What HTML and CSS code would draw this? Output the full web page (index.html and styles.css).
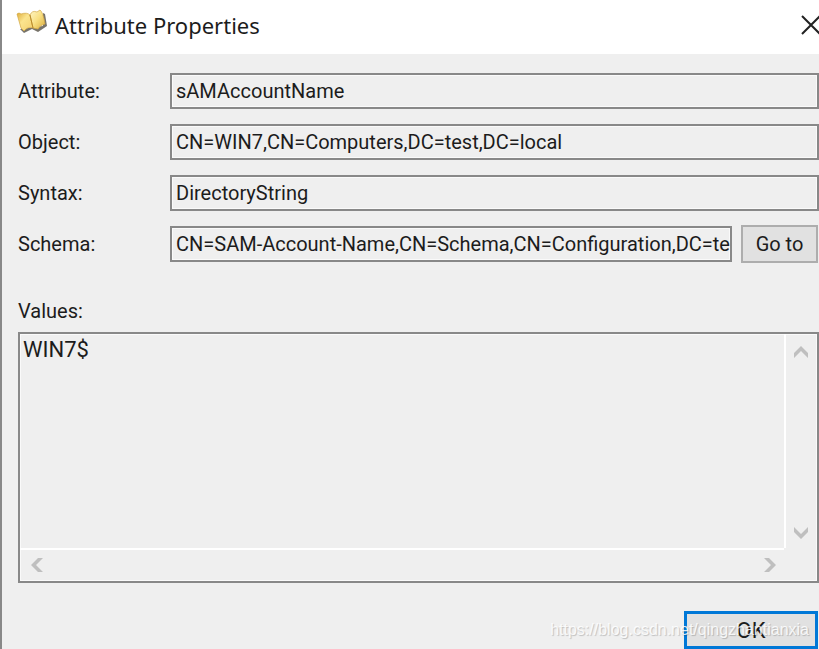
FILE: index.html
```
<!DOCTYPE html>
<html lang="en">
<head>
  <meta charset="UTF-8" />
  <meta name="viewport" content="width=device-width, initial-scale=1.0"/>
  <title>Attribute Properties</title>
  <link rel="stylesheet" href="styles.css">
</head>
<body>
  <div id="dialog">
    <header id="title-bar">
      <svg class="book" width="32" height="26" viewBox="0 0 32 26">
        <defs>
          <linearGradient id="page-left" x1="0" y1="0" x2="1" y2="1">
            <stop offset="0" stop-color="#dfae3c"/>
            <stop offset="0.4" stop-color="#fbe48e"/>
            <stop offset="1" stop-color="#f3d070"/>
          </linearGradient>
          <linearGradient id="page-right" x1="0" y1="0" x2="1" y2="1">
            <stop offset="0" stop-color="#fff6c8"/>
            <stop offset="0.5" stop-color="#f8df82"/>
            <stop offset="1" stop-color="#dcae3c"/>
          </linearGradient>
        </defs>
        <path d="M4 20 L8 24 L16 20 L22 23 L31 17 L29 5 L27 4 L27 17 Z" fill="#77736a"/>
        <path d="M1 5 Q3 3 5 5 Q11 3 14 6 L17 19 Q12 17 8 22 L5 19 Z" fill="url(#page-left)" stroke="#d3a844" stroke-width="0.7"/>
        <path d="M14 6 Q16 1 21 3 L24 1 Q27 3 29 15 Q24 16 22 20 L17 19 Z" fill="url(#page-right)" stroke="#d3a844" stroke-width="0.7"/>
        <path d="M14 6 L17 19" stroke="#b98b2c"/>
      </svg>
      <h1>Attribute Properties</h1>
      <button class="close" aria-label="Close">
        <svg width="18" height="20" viewBox="0 0 18 20">
          <path d="M1 1 L19 19 M19 1 L1 19" stroke="#222" stroke-width="2" fill="none"/>
        </svg>
      </button>
    </header>

    <main>
      <div class="row">
        <label for="attribute">Attribute:</label>
        <input id="attribute" type="text" value="sAMAccountName" readonly>
      </div>
      <div class="row">
        <label for="object">Object:</label>
        <input id="object" type="text" value="CN=WIN7,CN=Computers,DC=test,DC=local" readonly>
      </div>
      <div class="row">
        <label for="syntax">Syntax:</label>
        <input id="syntax" type="text" value="DirectoryString" readonly>
      </div>
      <div class="row">
        <label for="schema">Schema:</label>
        <input id="schema" type="text" value="CN=SAM-Account-Name,CN=Schema,CN=Configuration,DC=te" readonly>
        <button class="goto">Go to</button>
      </div>

      <label class="values-label" for="values">Values:</label>
      <div class="list">
        <textarea id="values" readonly>WIN7$</textarea>
        <div class="scroll vertical">
          <button aria-label="Scroll up">
            <svg width="14" height="12" viewBox="0 0 14 12"><path d="M0 7 L7 0 L14 7 V12 L7 5 L0 12 Z"/></svg>
          </button>
          <button aria-label="Scroll down">
            <svg width="14" height="12" viewBox="0 0 14 12"><path d="M0 5 L7 12 L14 5 V0 L7 7 L0 0 Z"/></svg>
          </button>
        </div>
        <div class="scroll horizontal">
          <button aria-label="Scroll left">
            <svg width="12" height="14" viewBox="0 0 12 14"><path d="M7 0 L0 7 L7 14 H12 L5 7 L12 0 Z"/></svg>
          </button>
          <button aria-label="Scroll right">
            <svg width="12" height="14" viewBox="0 0 12 14"><path d="M5 0 L12 7 L5 14 H0 L7 7 L0 0 Z"/></svg>
          </button>
        </div>
      </div>
    </main>

    <footer>
      <button class="ok">OK</button>
      <span class="watermark">https://blog.csdn.net/qingzhantianxia</span>
    </footer>
  </div>
</body>
</html>
```
FILE: styles.css
```
* {
  box-sizing: border-box;
}
body {
  margin: 0;
  font-family: Roboto, "Liberation Sans", sans-serif;
  font-size: 20px;
  color: #1c1c1c;
  background: #efefef;
}
button, input, textarea {
  font: inherit;
  color: inherit;
}
#dialog {
  min-height: 100vh;
  border-left: 2px solid #888;
}
#title-bar {
  display: flex;
  align-items: center;
  height: 54px;
  padding: 0 0 4px 14px;
  background: #fff;
}
#title-bar .book {
  margin-bottom: 6px;
}
#title-bar h1 {
  flex: 1;
  margin: 0 0 0 7px;
  font-family: "Noto Sans", sans-serif;
  font-size: 22px;
  font-weight: 400;
}
.close {
  padding: 0;
  border: none;
  background: none;
}
.close svg {
  display: block;
}
main {
  padding: 19px 0 0 16px;
}
.row {
  display: flex;
  align-items: center;
  margin-bottom: 15px;
}
.row label {
  width: 152px;
}
.row input {
  flex: 1;
  min-width: 0;
  height: 36px;
  padding: 0 0 0 4px;
  border: 2px solid #888;
  outline: none;
  background: #efefef;
  box-shadow: inset 0 0 0 1px #fafafa;
}
.row .goto {
  width: 77px;
  height: 38px;
  margin: -1px 1px -1px 9px;
  padding: 0;
  border: 2px solid #adadad;
  background: #e1e1e1;
}
.values-label {
  display: block;
  margin-top: 34px;
  line-height: 30px;
}
.list {
  display: grid;
  grid-template-columns: 1fr 33px;
  grid-template-rows: 214px 33px;
  margin-top: 6px;
  border: 2px solid #888;
  box-shadow: inset 0 0 0 1px #fafafa;
}
.list textarea {
  padding: 3px;
  border: none;
  outline: none;
  resize: none;
  background: none;
  font-size: 22px;
}
.scroll {
  display: flex;
  justify-content: space-between;
}
.scroll button {
  padding: 0;
  border: none;
  background: none;
}
.scroll svg {
  display: block;
  fill: #bfbfbf;
}
.vertical {
  flex-direction: column;
  align-items: center;
  padding: 12px 2px 9px 0;
  border-left: 2px solid #fff;
}
.horizontal {
  align-items: center;
  padding: 0 8px 2px 11px;
  border-top: 2px solid #fff;
}
footer {
  position: relative;
  display: flex;
  justify-content: flex-end;
  padding: 28px 1px 0 0;
}
.ok {
  width: 134px;
  height: 38px;
  padding: 0;
  border: 3px solid #0078d7;
  background: #e1e1e1;
  font-size: 22px;
}
.watermark {
  position: absolute;
  right: 10px;
  bottom: 9px;
  font-family: "Liberation Sans", sans-serif;
  font-size: 16px;
  line-height: 20px;
  color: rgba(255, 255, 255, 0.85);
  text-shadow: 1px 1px 1px rgba(0, 0, 0, 0.2);
  pointer-events: none;
}
```
